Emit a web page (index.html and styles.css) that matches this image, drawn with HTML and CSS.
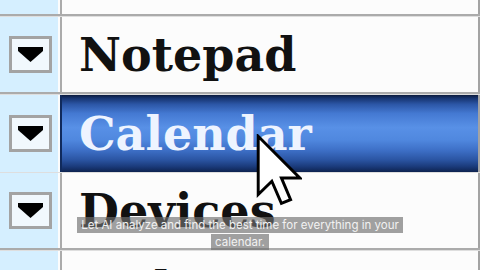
FILE: index.html
```html
<!DOCTYPE html>
<html>
<head>
<meta charset="utf-8">
<link rel="stylesheet" href="styles.css">
</head>
<body>
<div class="screen">
  <div class="row row-top">
    <div class="handle"></div>
    <div class="cell"></div>
  </div>
  <div class="row">
    <div class="handle"><span class="dd"><svg viewBox="0 0 25 15" width="25" height="15"><path d="M0 0H25V4L12.5 15L0 4Z"/></svg></span></div>
    <div class="cell"><span class="label">Notepad</span></div>
  </div>
  <div class="row selected">
    <div class="handle"><span class="dd"><svg viewBox="0 0 25 15" width="25" height="15"><path d="M0 0H25V4L12.5 15L0 4Z"/></svg></span></div>
    <div class="cell"><span class="label">Calendar</span></div>
  </div>
  <div class="row">
    <div class="handle"><span class="dd"><svg viewBox="0 0 25 15" width="25" height="15"><path d="M0 0H25V4L12.5 15L0 4Z"/></svg></span></div>
    <div class="cell"><span class="label">Devices</span></div>
  </div>
  <div class="row row-last">
    <div class="handle"><span class="dd"><svg viewBox="0 0 25 15" width="25" height="15"><path d="M0 0H25V4L12.5 15L0 4Z"/></svg></span></div>
    <div class="cell"><span class="label">Todo</span></div>
  </div>

  <div class="caption"><span>Let AI analyze and find the best time for everything in your<br>calendar.</span></div>

  <svg class="cursor" viewBox="0 0 12.5 19.5" width="46" height="72"><path d="M0.6 0.6 L0.6 16.4 L4.3 12.8 L6.9 18.8 L9.4 17.8 L6.9 11.9 L11.9 11.9 Z"/></svg>
</div>
</body>
</html>
```

FILE: styles.css
```css
html, body {
  margin: 0;
  padding: 0;
  background: #fcfcfc;
}

.screen {
  position: relative;
  width: 480px;
  height: 270px;
  overflow: hidden;
  background: #fcfcfc;
  display: flex;
  flex-direction: column;
}

.row {
  display: flex;
  flex: none;
  height: 75px;
  border-top: 1px solid #dedede;
  border-bottom: 2px solid #ababab;
}

.row-top {
  height: 14px;
  border-top: none;
}

.row-last {
  border-bottom: none;
}

.handle {
  width: 58px;
  flex: none;
  background: #d5efff;
  display: flex;
  align-items: center;
  justify-content: center;
}

.cell {
  flex: 1;
  margin-left: 2px;
  border-left: 2px solid #ababab;
  border-right: 2px solid #a3a3a3;
  background: #fcfcfc;
  display: flex;
  align-items: center;
  padding-left: 17px;
  overflow: hidden;
}

.dd {
  box-sizing: border-box;
  width: 43px;
  height: 37px;
  border: 3px solid #a3a3a3;
  background: #f1f8fd;
  display: flex;
  align-items: center;
  justify-content: center;
  margin-left: 2px;
}

.dd svg {
  display: block;
  fill: #000;
}

.label {
  font-family: "DejaVu Serif", serif;
  font-weight: bold;
  font-size: 46px;
  line-height: 1;
  color: #111;
  white-space: nowrap;
}

.selected {
  height: 77px;
  border-bottom: none;
}

.selected .cell {
  border-left-color: #102a5c;
  background: linear-gradient(to bottom,
    #0b1a3c 0%,
    #16336e 4%,
    #2c56a6 12%,
    #4479d2 24%,
    #5890e6 42%,
    #5088df 58%,
    #3d6fc6 72%,
    #2b55a3 84%,
    #1a3a7a 93%,
    #0e2350 100%);
}

.selected .label {
  color: #eef4ff;
}

.caption {
  position: absolute;
  left: 0;
  right: 0;
  top: 217px;
  text-align: center;
  font-family: Inter, "Noto Sans", sans-serif;
  font-size: 11.5px;
  line-height: 17px;
  color: #f2f2f2;
}

.caption span {
  background: rgba(112, 112, 112, 0.66);
  padding: 1px 4px;
  -webkit-box-decoration-break: clone;
  box-decoration-break: clone;
}

.cursor {
  position: absolute;
  left: 256px;
  top: 134px;
  fill: #fff;
  stroke: #000;
  stroke-width: 0.8;
  stroke-linejoin: miter;
}
```
